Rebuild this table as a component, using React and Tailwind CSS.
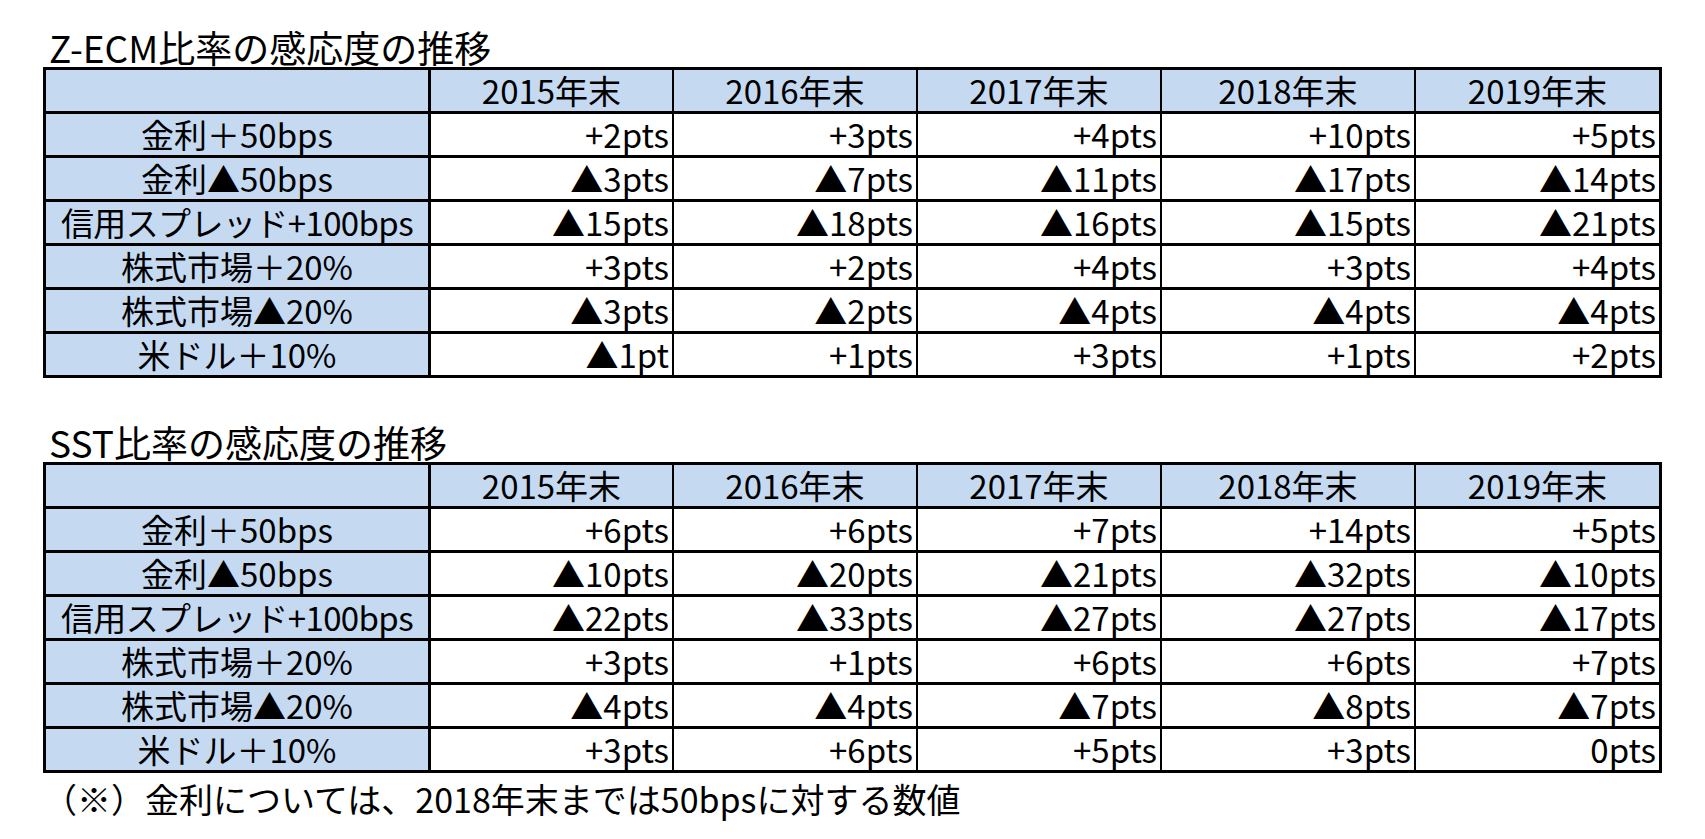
import React from "react";

const years = ["2015年末", "2016年末", "2017年末", "2018年末", "2019年末"];

const table1 = [
  ["金利＋50bps", ["+2pts", "+3pts", "+4pts", "+10pts", "+5pts"]],
  ["金利▲50bps", ["▲3pts", "▲7pts", "▲11pts", "▲17pts", "▲14pts"]],
  ["信用スプレッド+100bps", ["▲15pts", "▲18pts", "▲16pts", "▲15pts", "▲21pts"]],
  ["株式市場＋20%", ["+3pts", "+2pts", "+4pts", "+3pts", "+4pts"]],
  ["株式市場▲20%", ["▲3pts", "▲2pts", "▲4pts", "▲4pts", "▲4pts"]],
  ["米ドル＋10%", ["▲1pt", "+1pts", "+3pts", "+1pts", "+2pts"]],
];

const table2 = [
  ["金利＋50bps", ["+6pts", "+6pts", "+7pts", "+14pts", "+5pts"]],
  ["金利▲50bps", ["▲10pts", "▲20pts", "▲21pts", "▲32pts", "▲10pts"]],
  ["信用スプレッド+100bps", ["▲22pts", "▲33pts", "▲27pts", "▲27pts", "▲17pts"]],
  ["株式市場＋20%", ["+3pts", "+1pts", "+6pts", "+6pts", "+7pts"]],
  ["株式市場▲20%", ["▲4pts", "▲4pts", "▲7pts", "▲8pts", "▲7pts"]],
  ["米ドル＋10%", ["+3pts", "+6pts", "+5pts", "+3pts", "0pts"]],
];

function Table({ rows }) {
  return (
    <div className="grid w-fit grid-cols-[383px_241px_242px_242px_252px_243px] gap-x-[2px] gap-y-[3px] bg-black p-[3px]">
      <div className="mr-[1px] h-[41px] bg-[#c5d9f1]" />
      {years.map((y) => (
        <div key={y} className="h-[41px] bg-[#c5d9f1] text-center text-[33px] leading-[41px] whitespace-nowrap">
          {y}
        </div>
      ))}
      {rows.map(([label, vals]) => (
        <React.Fragment key={label}>
          <div
            className={
              label.length > 12
                ? "mr-[1px] h-[41px] bg-[#c5d9f1] text-center text-[33px] leading-[41px] tracking-[-0.6px] whitespace-nowrap"
                : "mr-[1px] h-[41px] bg-[#c5d9f1] text-center text-[33px] leading-[41px] whitespace-nowrap"
            }
          >
            {label}
          </div>
          {vals.map((v, i) => (
            <div key={i} className="h-[41px] bg-white pr-[3px] text-right text-[33px] leading-[41px] whitespace-nowrap">
              {v}
            </div>
          ))}
        </React.Fragment>
      ))}
    </div>
  );
}

export default function App() {
  return (
    <div
      className="h-[839px] w-[1705px] bg-white pl-[43px] text-black"
      style={{ fontFamily: '"Noto Sans CJK JP", "Noto Sans", sans-serif' }}
    >
      <div className="pt-[27px]">
        <div className="h-[40px] pl-[6px] text-[37px] leading-[40px] whitespace-nowrap">Z-ECM比率の感応度の推移</div>
        <Table rows={table1} />
        <div className="mt-[44px] h-[40px] pl-[6px] text-[37px] leading-[40px] whitespace-nowrap">SST比率の感応度の推移</div>
        <Table rows={table2} />
        <div className="mt-[6px] h-[40px] text-[34px] leading-[40px] whitespace-nowrap">（※）金利については、2018年末までは50bpsに対する数値</div>
      </div>
    </div>
  );
}
